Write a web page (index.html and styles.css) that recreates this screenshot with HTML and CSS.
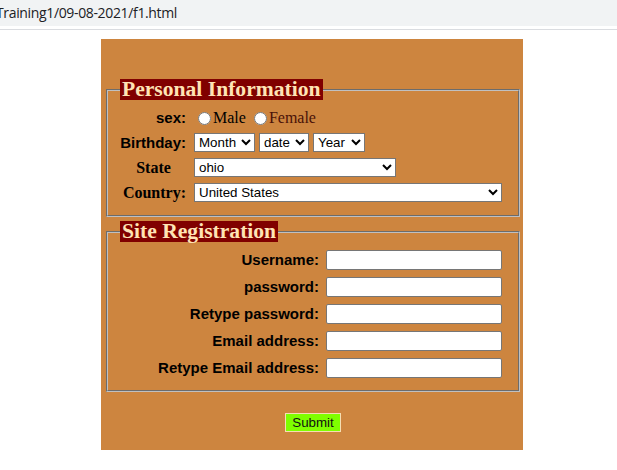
FILE: index.html
```html
<!DOCTYPE html>
<html>
<head>
<meta charset="utf-8">
<title>f1</title>
<link rel="stylesheet" href="styles.css">
</head>
<body>
<div class="chrome"><div class="url">Training1/09-08-2021/f1.html</div></div>
<div class="spacer"></div>
<div class="rule"></div>
<form class="card">
  <fieldset class="personal">
    <legend>Personal Information</legend>
    <div class="grid-personal">
      <span class="lbl sans right">sex:</span>
      <span class="val radios"><label><input type="radio" name="sex">Male</label> <label class="female"><input type="radio" name="sex">Female</label></span>

      <span class="lbl sans right">Birthday:</span>
      <span class="val"><select class="sel-month"><option>Month</option></select> <select class="sel-date"><option>date</option></select> <select class="sel-year"><option>Year</option></select></span>

      <span class="lbl serif center">State</span>
      <span class="val"><select class="sel-state"><option>ohio</option></select></span>

      <span class="lbl serif right">Country:</span>
      <span class="val"><select class="sel-country"><option>United States</option></select></span>
    </div>
  </fieldset>
  <fieldset class="site">
    <legend>Site Registration</legend>
    <div class="grid-site">
      <span class="lbl sans right">Username:</span><input class="txt" type="text">
      <span class="lbl sans right">password:</span><input class="txt" type="password">
      <span class="lbl sans right">Retype password:</span><input class="txt" type="password">
      <span class="lbl sans right">Email address:</span><input class="txt" type="text">
      <span class="lbl sans right">Retype Email address:</span><input class="txt" type="text">
    </div>
  </fieldset>
  <div class="actions"><button type="button" class="submit">Submit</button></div>
</form>
</body>
</html>
```
FILE: styles.css
```css
body {
  margin: 0;
  background: #ffffff;
}

.chrome {
  height: 26px;
  background: #f1f3f4;
  overflow: hidden;
}

.url {
  margin-left: -4px;
  font-family: "Open Sans", "Noto Sans", sans-serif;
  font-size: 14px;
  letter-spacing: -0.35px;
  line-height: 25px;
  color: #202124;
  white-space: nowrap;
}

.spacer {
  height: 3px;
}

.rule {
  height: 1px;
  background: #dadce0;
}

.card {
  box-sizing: border-box;
  width: 422px;
  margin: 9px 0 0 101px;
  padding: 40px 1px 18px 3px;
  background: #cd853f;
}

fieldset {
  margin: 0 2px;
  padding: 5px 12px 10px;
  border: 2px groove #c0c0c0;
  min-width: 0;
}

fieldset.site {
  margin-top: 4px;
  padding-top: 4px;
  padding-bottom: 9px;
}

legend {
  padding: 0 2px;
  background: #800000;
  color: #ffe4b5;
  font-family: "Liberation Serif", "Times New Roman", serif;
  font-weight: bold;
  font-size: 21.6px;
  line-height: 21px;
}

.grid-personal {
  display: grid;
  grid-template-columns: 67px 1fr;
  column-gap: 7px;
  grid-auto-rows: 25px;
  align-items: center;
}

.grid-site {
  display: grid;
  grid-template-columns: 1fr 176px;
  column-gap: 6px;
  grid-auto-rows: 27px;
  align-items: center;
  margin-right: 4px;
}

.lbl {
  color: #000;
  white-space: nowrap;
}

.sans {
  font-family: "Liberation Sans", Arial, sans-serif;
  font-weight: bold;
  font-size: 15px;
}

.serif {
  font-family: "Liberation Serif", "Times New Roman", serif;
  font-weight: bold;
  font-size: 16px;
}

.right {
  text-align: right;
  padding-right: 1px;
}

.center {
  text-align: center;
}

.val {
  font-family: "Liberation Sans", Arial, sans-serif;
  font-size: 13.333px;
  white-space: nowrap;
  display: flex;
  align-items: center;
  gap: 4px;
}

.radios {
  font-family: "Liberation Serif", "Times New Roman", serif;
  font-size: 16px;
  gap: 4px;
  color: #000;
}

.radios label {
  display: inline-flex;
  align-items: center;
}

.radios input {
  margin: 2px 2px 0 4px;
  width: 13px;
  height: 13px;
}

.radios .female {
  color: #4a1208;
}

select {
  box-sizing: border-box;
  height: 19px;
  margin: 0;
  font-family: "Liberation Sans", Arial, sans-serif;
  font-size: 13.333px;
  color: #000;
  background: #fff;
}

.sel-month { width: 61px; }
.sel-date { width: 50px; }
.sel-year { width: 52px; }
.sel-state { width: 202px; }
.sel-country { width: 308px; }

.txt {
  box-sizing: border-box;
  width: 176px;
  height: 20px;
  margin: 0;
  padding: 0 2px;
  border: 1px solid #767676;
  border-radius: 2px;
  background: #fff;
  font-family: "Liberation Sans", Arial, sans-serif;
  font-size: 13.333px;
}

.actions {
  display: flex;
  justify-content: center;
  margin-top: 21px;
}

.submit {
  box-sizing: border-box;
  width: 56px;
  height: 19px;
  padding: 0;
  border: 1px solid #f5deb3;
  border-radius: 0;
  background: #7fff00;
  color: #111;
  font-family: "Liberation Sans", Arial, sans-serif;
  font-size: 13.333px;
  line-height: 17px;
}
```
